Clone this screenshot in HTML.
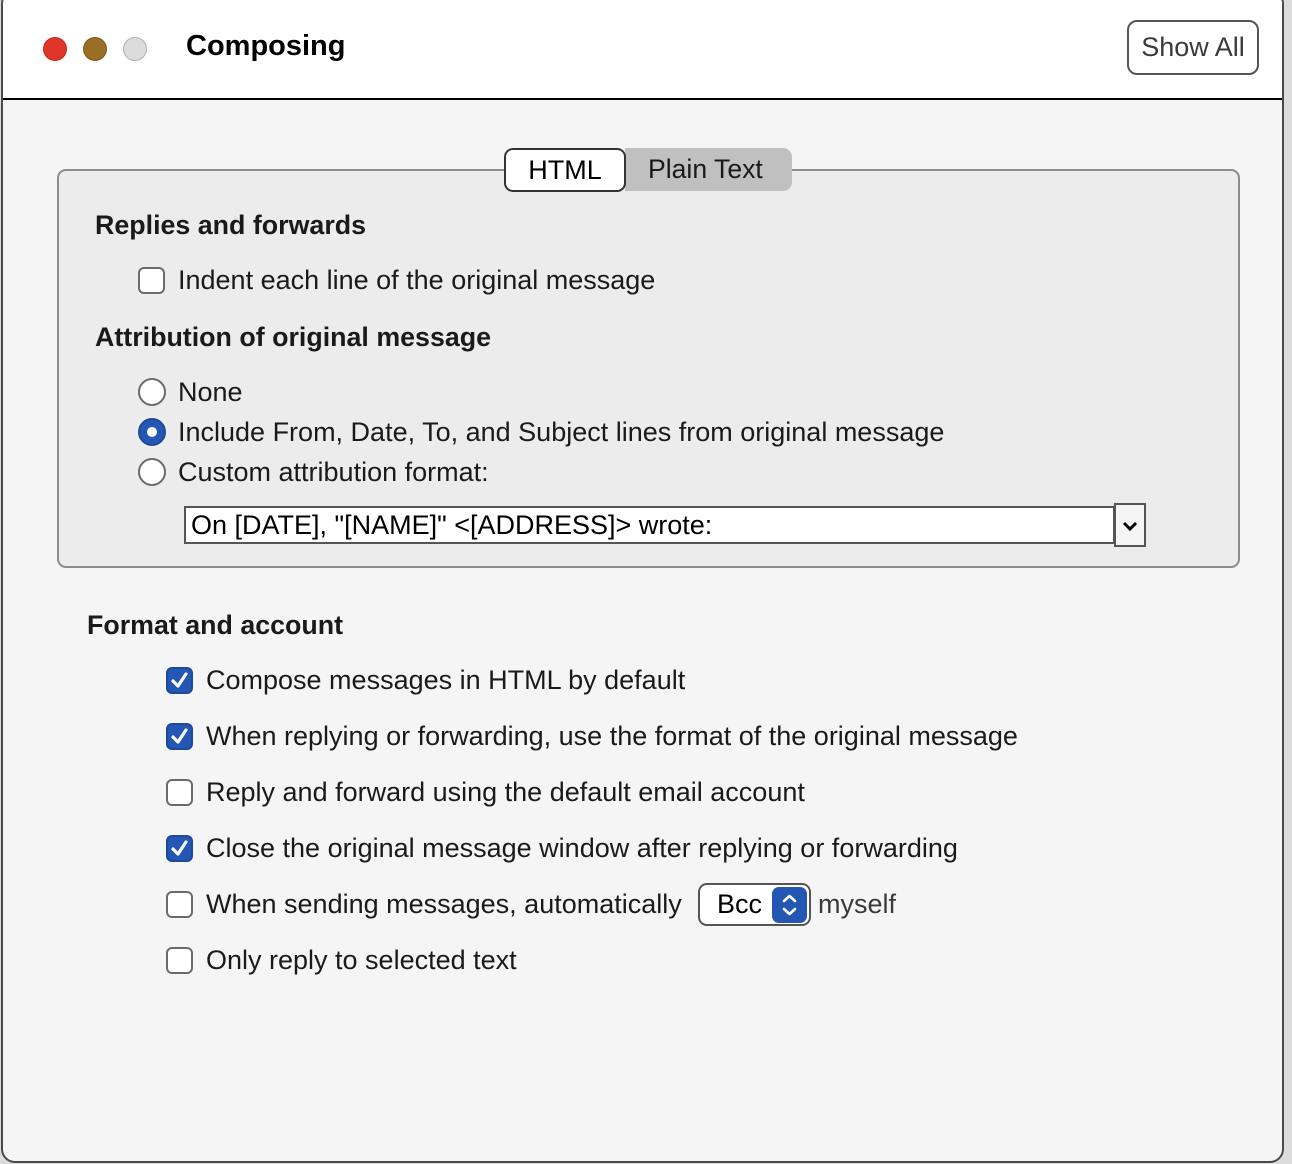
<!DOCTYPE html>
<html><head><style>
*{margin:0;padding:0;box-sizing:border-box}
body{width:1292px;height:1164px;background:#dcdcdc;font-family:"Liberation Sans",sans-serif;position:relative;overflow:hidden;color:#1a1a1a}
.win{position:absolute;left:1px;top:-10px;width:1283px;height:1173px;border:2px solid #4a4a4a;border-radius:14px;background:#f5f5f5;overflow:hidden}
.tb{position:absolute;left:0;top:0;width:100%;height:108px;background:#fff;border-bottom:2px solid #000}
.a{position:absolute;white-space:nowrap}
.dot{position:absolute;width:24px;height:24px;border-radius:50%}
.t{font-size:27px;line-height:30px;top:-2px}
.b{font-weight:bold;font-size:26.8px}
.cb{position:absolute;width:27px;height:27px;border:2px solid #6b6b6b;border-radius:6px;background:#fff}
.cb.on{background:#2457b3;border-color:#1d4a9a}
.rd{position:absolute;width:28px;height:28px;border:2px solid #6b6b6b;border-radius:50%;background:#fff}
</style></head><body>
<div class="win">
<div class="tb">
<div class="dot" style="left:40px;top:45px;background:#e0362a;border:1px solid #c22a20"></div>
<div class="dot" style="left:80px;top:45px;background:#9a6e25;border:1px solid #7d5a1c"></div>
<div class="dot" style="left:120px;top:45px;background:#dcdcdc;border:1px solid #b0b0b0"></div>
<div class="a" style="left:183px;top:38px;font-size:29px;font-weight:bold;color:#000">Composing</div>
<div class="a" style="left:1124px;top:28px;width:132px;height:55px;border:2px solid #555;border-radius:10px;font-size:27px;color:#3a3a3a;text-align:center;line-height:51px">Show All</div>
</div>
</div>
<div class="a" style="left:57px;top:169px;width:1183px;height:399px;background:#ececec;border:2px solid #8c8c8c;border-radius:9px"></div>
<div class="a" style="left:625px;top:148px;width:167px;height:43px;background:#c0c0c0;border-radius:0 9px 9px 0;font-size:26.6px;line-height:43px;padding-left:23px;color:#1a1a1a">Plain Text</div>
<div class="a" style="left:504px;top:148px;width:122px;height:44px;background:#fff;border:2px solid #333;border-radius:9px;font-size:27px;line-height:40px;text-align:center;color:#000">HTML</div>
<div class="a b" style="left:95px;top:210px">Replies and forwards</div>
<div class="cb" style="left:138px;top:267px"></div>
<div class="a t" style="left:178px;top:265px">Indent each line of the original message</div>
<div class="a b" style="left:95px;top:322px">Attribution of original message</div>
<div class="rd" style="left:138px;top:378px"></div>
<div class="a t" style="left:178px;top:377px">None</div>
<div class="rd" style="left:138px;top:418px;background:#2457b3;border-color:#1d4a9a"><div style="position:absolute;left:7px;top:7px;width:10px;height:10px;border-radius:50%;background:#fff"></div></div>
<div class="a t" style="left:178px;top:417px">Include From, Date, To, and Subject lines from original message</div>
<div class="rd" style="left:138px;top:458px"></div>
<div class="a t" style="left:178px;top:457px">Custom attribution format:</div>
<div class="a" style="left:184px;top:506px;width:931px;height:38px;background:#fff;border:2px solid #555;font-size:27px;line-height:34px;padding-left:5px;color:#000">On [DATE], "[NAME]" &lt;[ADDRESS]&gt; wrote:</div>
<div class="a" style="left:1114px;top:503px;width:32px;height:44px;background:#f5f5f5;border:2px solid #555"><svg width="28" height="40"><path d="M8 18 L14 24 L20 18" stroke="#000" stroke-width="3" fill="none"/></svg></div>
<div class="a b" style="left:87px;top:610px">Format and account</div>

<div class="cb on" style="left:166px;top:667px"><svg width="23" height="23"><path d="M5 12 L10 17 L18 5" stroke="#fff" stroke-width="3.2" fill="none" stroke-linecap="round" stroke-linejoin="round"/></svg></div>
<div class="a t" style="left:206px;top:665px">Compose messages in HTML by default</div>
<div class="cb on" style="left:166px;top:723px"><svg width="23" height="23"><path d="M5 12 L10 17 L18 5" stroke="#fff" stroke-width="3.2" fill="none" stroke-linecap="round" stroke-linejoin="round"/></svg></div>
<div class="a t" style="left:206px;top:721px">When replying or forwarding, use the format of the original message</div>
<div class="cb" style="left:166px;top:779px"></div>
<div class="a t" style="left:206px;top:777px">Reply and forward using the default email account</div>
<div class="cb on" style="left:166px;top:835px"><svg width="23" height="23"><path d="M5 12 L10 17 L18 5" stroke="#fff" stroke-width="3.2" fill="none" stroke-linecap="round" stroke-linejoin="round"/></svg></div>
<div class="a t" style="left:206px;top:833px">Close the original message window after replying or forwarding</div>
<div class="cb" style="left:166px;top:891px"></div>
<div class="a t" style="left:206px;top:889px">When sending messages, automatically</div>
<div class="a" style="left:698px;top:883px;width:113px;height:43px;background:#fff;border:2px solid #555;border-radius:9px;font-size:27px;line-height:38px;padding-left:17px;color:#000">Bcc
<div style="position:absolute;left:72px;top:2px;width:35px;height:36px;background:#2457b3;border-radius:7px"><svg width="35" height="36"><path d="M12 14 L17.5 9 L23 14 M12 22 L17.5 27 L23 22" stroke="#fff" stroke-width="2.6" fill="none" stroke-linecap="round" stroke-linejoin="round"/></svg></div></div>
<div class="a t" style="left:818px;top:889px;color:#3a3a3a">myself</div>
<div class="cb" style="left:166px;top:947px"></div>
<div class="a t" style="left:206px;top:945px">Only reply to selected text</div>
</body></html>
